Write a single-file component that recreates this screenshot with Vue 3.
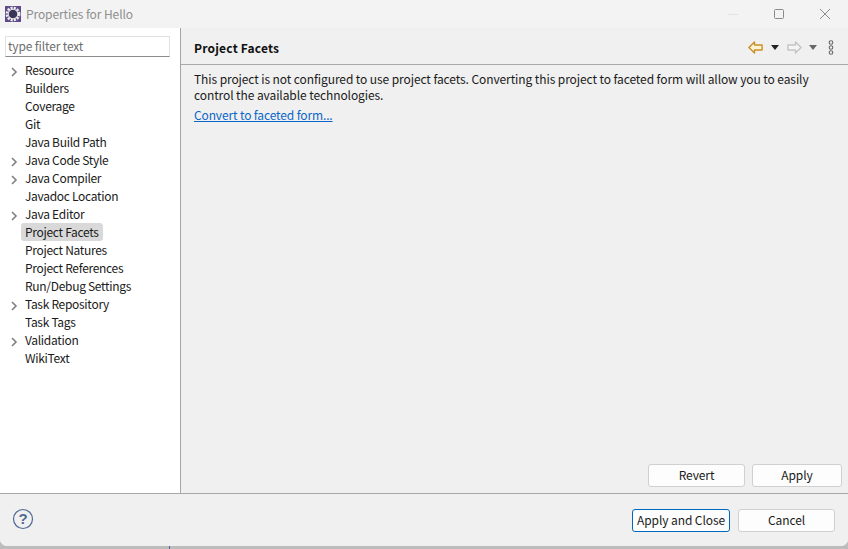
<script setup>
const items = [
  ['Resource', true], ['Builders', false], ['Coverage', false], ['Git', false],
  ['Java Build Path', false], ['Java Code Style', true], ['Java Compiler', true],
  ['Javadoc Location', false], ['Java Editor', true], ['Project Facets', false, true],
  ['Project Natures', false], ['Project References', false], ['Run/Debug Settings', false],
  ['Task Repository', true], ['Task Tags', false], ['Validation', true], ['WikiText', false],
]
</script>

<template>
  <div class="screen">
    <span class="tick"></span>
    <div class="window">
      <header class="titlebar">
        <svg class="app-icon" width="16" height="16" viewBox="0 0 16 16">
          <rect width="16" height="16" fill="#5f4b8b" />
          <circle cx="8" cy="8" r="6.2" fill="none" stroke="#eeeeee" stroke-width="2.4" stroke-dasharray="2.1 1.15" />
          <circle cx="8" cy="8" r="5.2" fill="#eeeeee" />
          <circle cx="8" cy="8" r="4.3" fill="#3a3658" />
        </svg>
        <span class="title">Properties for Hello</span>
        <div class="controls">
          <svg width="12" height="12" viewBox="0 0 12 12"><path d="M1 6.5h10" stroke="#e3e3e3" /></svg>
          <svg width="12" height="12" viewBox="0 0 12 12"><rect x="1.5" y="1.5" width="9" height="9" rx="1" fill="none" stroke="#8a8a8a" /></svg>
          <svg width="12" height="12" viewBox="0 0 12 12"><path d="M1 1l10 10M11 1L1 11" stroke="#8a8a8a" /></svg>
        </div>
      </header>

      <div class="body">
        <aside class="sidebar">
          <div class="filter">type filter text</div>
          <ul class="tree">
            <li v-for="it in items" :key="it[0]" class="row">
              <span class="twist">
                <svg v-if="it[1]" width="8" height="10" viewBox="0 0 8 10"><path d="M2 1L6 5 2 9" fill="none" stroke="#808080" stroke-width="1.6" /></svg>
              </span>
              <span class="label" :class="{ selected: it[2] }">{{ it[0] }}</span>
            </li>
          </ul>
        </aside>

        <main class="content">
          <div class="head">
            <h1>Project Facets</h1>
            <div class="nav">
              <svg width="15" height="13" viewBox="0 0 15 13"><path d="M.9 6.5L6.5 1v3h7.6v5H6.5v3z" fill="#fdf3d2" stroke="#c8912a" stroke-width="1.4" stroke-linejoin="round" /></svg>
              <svg class="tri" width="8" height="5" viewBox="0 0 8 5"><path d="M0 0h8L4 5z" fill="#222" /></svg>
              <svg class="fwd" width="15" height="13" viewBox="0 0 15 13"><path d="M14.1 6.5L8.5 1v3H.9v5h7.6v3z" fill="#f4f4f4" stroke="#c4c4c4" stroke-width="1.4" stroke-linejoin="round" /></svg>
              <svg class="tri second" width="8" height="5" viewBox="0 0 8 5"><path d="M0 0h8L4 5z" fill="#666" /></svg>
              <svg class="more" width="6" height="15" viewBox="0 0 6 15"><g fill="none" stroke="#666" stroke-width="1.1"><circle cx="3" cy="2.5" r="1.8" /><circle cx="3" cy="7.5" r="1.8" /><circle cx="3" cy="12.5" r="1.8" /></g></svg>
            </div>
          </div>
          <div class="pane">
            <p>This project is not configured to use project facets. Converting this project to faceted form will allow you to easily<br />control the available technologies.</p>
            <a class="link">Convert to faceted form...</a>
            <div class="pane-actions">
              <button class="btn revert">Revert</button>
              <button class="btn apply">Apply</button>
            </div>
          </div>
        </main>
      </div>

      <footer class="footer">
        <svg class="help" width="22" height="22" viewBox="0 0 22 22">
          <circle cx="11" cy="11" r="9.5" fill="none" stroke="#4f6a94" stroke-width="1.2" />
          <text x="11" y="16" text-anchor="middle" class="q">?</text>
        </svg>
        <div class="footer-actions">
          <button class="btn primary">Apply and Close</button>
          <button class="btn cancel">Cancel</button>
        </div>
      </footer>
    </div>
  </div>
</template>

<style scoped>
.screen { width: 848px; height: 549px; background: #bcbcbc; overflow: hidden; position: relative; }
.tick { position: absolute; left: 169px; top: 546px; width: 1px; height: 3px; background: #3f67a8; }
.window { position: relative; height: 546px; background: #f0f0f0; border-radius: 0 0 7px 7px; display: flex; flex-direction: column; overflow: hidden;
  font-family: "Noto Sans CJK KR", "Noto Sans", sans-serif; font-size: 12px; color: #1a1a1a; letter-spacing: -0.09px; }
.titlebar { height: 28px; flex: none; background: #f3f3f3; display: flex; align-items: center; padding-left: 5px; box-sizing: border-box; }
.app-icon { margin-right: 5px; }
.title { color: #8f8f8f; font-size: 12px; line-height: 28px; }
.controls { margin-left: auto; display: flex; gap: 34px; padding-right: 17px; }
.body { flex: 1; display: flex; min-height: 0; border-bottom: 1px solid #a8a8a8; }
.sidebar { flex: none; width: 175px; background: #fff; border-right: 1px solid #a5a5a5; padding: 8px 0 0 5px; }
.filter { width: 161px; height: 19px; border: 1px solid #e2e2e2; border-bottom-color: #8b8b8b; padding-left: 2px; line-height: 18px; color: #6e6e6e; background: #fff; letter-spacing: -0.15px; }
.tree { list-style: none; margin: 4px 0 0; padding: 0; letter-spacing: -0.3px; }
.row { height: 18px; display: flex; align-items: center; line-height: 18px; white-space: nowrap; }
.twist { width: 16px; margin-left: 5px; display: flex; padding-top: 3px; box-sizing: border-box; }
.label { padding: 0 4px; margin-left: -5px; }
.label.selected { background: #d9d9d9; border-radius: 3px; }
.content { flex: 1; display: flex; flex-direction: column; min-width: 0; }
.head { height: 37px; flex: none; border-bottom: 1px solid #a9a9a9; display: flex; align-items: center; padding: 2px 14px 0 13px; box-sizing: border-box; }
h1 { font-size: 12px; font-weight: 700; margin: 0; color: #111; letter-spacing: 0.2px; }
.nav { margin-left: auto; display: flex; align-items: center; }
.tri { margin-left: 8px; }
.tri.second { margin-left: 7px; }
.fwd { margin-left: 8px; }
.more { margin-left: 11px; }
.pane { flex: 1; padding: 6px 13px 6px; display: flex; flex-direction: column; min-height: 0; }
p { margin: 0; line-height: 16px; }
.link { color: #0a66c8; text-decoration: underline; margin-top: 3px; line-height: 18px; align-self: flex-start; letter-spacing: -0.13px; }
.pane-actions { margin-top: auto; display: flex; justify-content: flex-end; gap: 7px; margin-right: -7px; }
.btn { height: 23px; box-sizing: border-box; background: #fdfdfd; border: 1px solid #d0d0d0; border-radius: 3px; font: inherit; letter-spacing: inherit; color: #1a1a1a; padding: 0 0 2px; line-height: 19px; }
.revert { width: 97px; }
.apply { width: 90px; }
.footer { height: 52px; flex: none; display: flex; align-items: center; padding: 0 13px 0 12px; background: #f0f0f0; }
.help { margin-bottom: 2px; }
.q { font: 700 15px "Liberation Sans", sans-serif; fill: #4f6a94; }
.footer-actions { margin-left: auto; display: flex; gap: 8px; }
.footer-actions .btn { padding-bottom: 1px; }
.primary { width: 98px; border: 1px solid #0067c0; }
.cancel { width: 97px; }
</style>

<style>
html, body { margin: 0; }
</style>
